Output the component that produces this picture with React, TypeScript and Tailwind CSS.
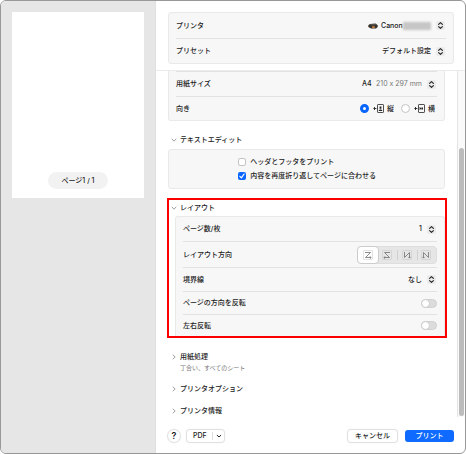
import type { ReactNode } from "react";

const SANS = "font-['Inter','Noto_Sans_CJK_JP',sans-serif]";

function Stepper() {
  return (
    <svg viewBox="0 0 9 9" className="pointer-events-none mr-px ml-[5px] h-[9px] w-[9px] shrink-0" aria-hidden="true">
      <rect width="9" height="9" rx="2" fill="#ebebeb" />
      <path d="M2.6 3.4 4.5 1.6 6.4 3.4M2.6 5.6 4.5 7.4 6.4 5.6" fill="none" stroke="#222" strokeWidth="1.1" strokeLinecap="round" strokeLinejoin="round" />
    </svg>
  );
}

function PrinterIcon() {
  return (
    <svg viewBox="0 0 10 6" className="h-[6px] w-[10px] shrink-0" aria-hidden="true">
      <path d="M0.3 2.2 2 1 7.5 0.6 9.7 2.2V4L8 5.4H3L0.3 4Z" fill="#34302c" />
      <path d="M1 1.9 2.3 1.2 7.3 0.9 8.8 1.8 5 2.4Z" fill="#5d5751" />
      <path d="M3.8 3.4 6.4 3 7.2 4.5 4.6 5.3Z" fill="#c9843f" />
    </svg>
  );
}

function OrientationIcon({ landscape = false }: { landscape?: boolean }) {
  return (
    <svg viewBox="0 0 11 10" className="h-[10px] w-[11px] shrink-0" aria-hidden="true" fill="none" stroke="#222" strokeWidth="0.9">
      <path d="M0.4 4.5H3.4M1.5 3 1.5 6" />
      <rect x="4.5" y="0.5" width="6" height="8" rx="0.6" strokeWidth="0.8" />
      {landscape ? (
        <path d="M5.6 2.8V6.2L7.3 4.5ZM9 3.6V5.4H7.4V3.6Z" fill="#222" stroke="none" />
      ) : (
        <path d="M5.8 7V6.2L6.9 5.4H8.1L9.2 6.2V7ZM6.6 2.4H8.4V4.8H6.6Z" fill="#222" stroke="none" />
      )}
    </svg>
  );
}

function Chevron({ open = false }: { open?: boolean }) {
  return (
    <svg viewBox="0 0 6 6" className="h-[6px] w-[6px] shrink-0" aria-hidden="true" fill="none" stroke="#8a8a8a" strokeWidth="0.8" strokeLinecap="round" strokeLinejoin="round">
      <path d={open ? "M1 2 3 4.2 5 2" : "M2 1 4.2 3 2 5"} />
    </svg>
  );
}

function Row({ label, htmlFor, height, first = false, children }: {
  label: string;
  htmlFor?: string;
  height: string;
  first?: boolean;
  children: ReactNode;
}) {
  return (
    <div className={`flex items-center justify-between ${height} ${first ? "" : "border-t border-[#e2e2e2]"}`}>
      {htmlFor ? <label htmlFor={htmlFor}>{label}</label> : <span>{label}</span>}
      <div className="flex items-center">{children}</div>
    </div>
  );
}

function Heading({ title, open = false }: { title: string; open?: boolean }) {
  return (
    <button type="button" aria-expanded={open} className="flex h-3 items-center gap-[3px] font-medium">
      <Chevron open={open} />
      {title}
    </button>
  );
}

function Select({ id, value }: { id: string; value: string }) {
  return (
    <select id={id} className="appearance-none bg-transparent font-medium" defaultValue={value}>
      <option>{value}</option>
    </select>
  );
}

function Radio({ id, checked = false }: { id: string; checked?: boolean }) {
  return (
    <input
      type="radio"
      id={id}
      name="orientation"
      defaultChecked={checked}
      className="h-[9px] w-[9px] shrink-0 appearance-none rounded-full border border-[#c4c4c4] bg-white checked:border-[3px] checked:border-[#0a66ff]"
    />
  );
}

function Toggle({ id }: { id: string }) {
  return (
    <input
      type="checkbox"
      role="switch"
      id={id}
      className="flex h-[9px] w-4 appearance-none items-center rounded-full border border-[#d0d0d0] bg-[#dcdcdc] before:-ml-px before:h-[9px] before:w-[9px] before:shrink-0 before:rounded-full before:border before:border-[#cacaca] before:bg-white before:content-[''] checked:justify-end checked:bg-[#0a66ff]"
    />
  );
}

const DIRECTIONS = [
  { name: "左上から右", line: "M3 3.5H8.5L3.5 8.5H9M7.9 7.3 9.1 8.5 7.9 9.7" },
  { name: "右上から左", line: "M9 3.5H3.5L8.5 8.5H3M4.1 7.3 2.9 8.5 4.1 9.7" },
  { name: "右上から下", line: "M3.5 3V8.5L8.5 3.5V9M7.3 7.9 8.5 9.1 9.7 7.9" },
  { name: "左上から下", line: "M8.5 3V8.5L3.5 3.5V9M2.3 7.9 3.5 9.1 4.7 7.9" },
];

function DirectionPicker() {
  return (
    <div role="radiogroup" aria-label="レイアウト方向" className="flex h-[18px] w-20 rounded-[4px] border border-[#dedede] bg-[#e6e6e6]">
      {DIRECTIONS.map((d, i) => (
        <label
          key={d.name}
          className={`flex flex-1 items-center justify-center ${i === 0 ? "-m-px rounded-[4px] border border-[#cccccc] bg-white" : ""} ${i > 1 ? "relative before:absolute before:left-0 before:h-[10px] before:w-px before:bg-[#d0d0d0]" : ""}`}
        >
          <input type="radio" name="direction" aria-label={d.name} defaultChecked={i === 0} className="sr-only" />
          <svg viewBox="0 0 12 12" className="h-3 w-3" aria-hidden="true" fill="none">
            <rect x="1.5" y="1.5" width="9" height="9" rx="0.5" stroke="#c4c4c4" strokeWidth="0.7" strokeOpacity="0.7" />
            <path d={d.line} stroke="#7c7c7c" strokeWidth="0.9" />
          </svg>
        </label>
      ))}
    </div>
  );
}

export default function App() {
  return (
    <div className={`flex min-h-screen overflow-hidden rounded-[6px] border border-[#989898] bg-white text-[7px] leading-[10px] font-medium text-[#222] ${SANS}`}>
      <aside className="w-[154px] shrink-0 bg-[#e6e6e6] p-[11px]">
        <div className="flex h-[186px] flex-col items-center justify-end bg-white pb-[9px]">
          <div className="flex h-[17px] w-[60px] items-center justify-center rounded-full bg-[#f2f2f2]">ページ1 / 1</div>
        </div>
      </aside>

      <main className="flex min-w-0 flex-1 flex-col border-l border-[#e0e0e0]">
        <header className="border-b border-[#ebebeb] pt-[11px] pr-[11px] pb-[6px] pl-3">
          <div className="rounded-[3px] border border-[#e9e9e9] bg-[#f7f7f7] px-[7px]">
            <Row label="プリンタ" htmlFor="printer" height="h-[25px]" first>
              <PrinterIcon />
              <span className="ml-[3px] flex items-center">
                <Select id="printer" value="Canon" />
                <span className="h-2 w-7 bg-[#c6c6c6] blur-[1px]" />
              </span>
              <Stepper />
            </Row>
            <Row label="プリセット" htmlFor="preset" height="h-[25px]">
              <Select id="preset" value="デフォルト設定" />
              <Stepper />
            </Row>
          </div>
        </header>

        <div className="flex">
          <div className="min-w-0 flex-1 pr-[10px] pl-[11px]">
            <section className="mr-[2px] ml-px rounded-b-[3px] border border-t-0 border-[#e9e9e9] bg-[#f7f7f7] px-[7px]">
              <Row label="用紙サイズ" htmlFor="paper" height="h-[25px]">
                <Select id="paper" value="A4" />
                <span className="ml-1 font-normal text-[#777] [font-feature-settings:'calt'_0]">210 x 297 mm</span>
                <Stepper />
              </Row>
              <Row label="向き" height="h-6">
                <Radio id="portrait" checked />
                <label htmlFor="portrait" className="ml-1 flex items-center gap-[3px]">
                  <OrientationIcon />縦
                </label>
                <span className="ml-[7px] flex"><Radio id="landscape" /></span>
                <label htmlFor="landscape" className="mr-[2px] ml-1 flex items-center gap-[3px]">
                  <OrientationIcon landscape />横
                </label>
              </Row>
            </section>

            <section className="mt-[13px] mr-[2px] ml-px">
              <div className="pl-[3px]"><Heading title="テキストエディット" open /></div>
              <div className="mt-[3px] flex h-10 flex-col justify-center gap-1 rounded-[3px] border border-[#e9e9e9] bg-[#f7f7f7] pl-[25%]">
                <label className="flex items-center gap-1">
                  <input type="checkbox" className="h-2 w-2 appearance-none rounded-[2px] border border-[#c4c4c4] bg-white" />
                  ヘッダとフッタをプリント
                </label>
                <label className="flex items-center gap-1">
                  <span className="relative flex h-2 w-2">
                    <input type="checkbox" defaultChecked className="h-2 w-2 appearance-none rounded-[2px] bg-[#0a66ff]" />
                    <svg viewBox="0 0 8 8" className="pointer-events-none absolute inset-0" aria-hidden="true">
                      <path d="M1.9 4.3 3.4 5.9 6.1 2" fill="none" stroke="#fff" strokeWidth="1.2" strokeLinecap="round" strokeLinejoin="round" />
                    </svg>
                  </span>
                  内容を再度折り返してページに合わせる
                </label>
              </div>
            </section>

            <section className="mt-[9px] border-2 border-[#fb0000] pt-[2px]">
              <div className="pl-[2px]"><Heading title="レイアウト" open /></div>
              <div className="mt-[2px] ml-[6px] rounded-t-[3px] border border-b-0 border-[#e9e9e9] bg-[#f7f7f7] px-[7px]">
                <Row label="ページ数/枚" htmlFor="pages" height="h-6" first>
                  <Select id="pages" value="1" />
                  <Stepper />
                </Row>
                <Row label="レイアウト方向" height="h-[26px]">
                  <DirectionPicker />
                </Row>
                <Row label="境界線" htmlFor="border" height="h-6">
                  <Select id="border" value="なし" />
                  <Stepper />
                </Row>
                <Row label="ページの方向を反転" htmlFor="reverse" height="h-[23px]">
                  <Toggle id="reverse" />
                </Row>
                <Row label="左右反転" htmlFor="flip" height="h-[22px]">
                  <Toggle id="flip" />
                </Row>
              </div>
            </section>

            <section className="mt-[13px] flex flex-col items-start gap-[10px] pl-1">
              <div>
                <Heading title="用紙処理" />
                <p className="pl-[9px] text-[6px] font-normal text-[#777]">丁合い、すべてのシート</p>
              </div>
              <Heading title="プリンタオプション" />
              <Heading title="プリンタ情報" />
            </section>
          </div>

          <div className="flex w-2 shrink-0 flex-col border-l border-[#e4e4e4] bg-[#fafafa] px-px pt-[77px] pb-px" aria-hidden="true">
            <div className="flex-1 rounded-full bg-[#bcbcbc]" />
          </div>
        </div>

        <footer className="mt-auto flex items-center pt-3 pr-[11px] pb-[11px] pl-3">
          <button type="button" aria-label="ヘルプ" className="h-3 w-3 rounded-full text-[9px] leading-3 font-semibold shadow-[0_0_1px_1px_#dedede]">?</button>
          <button type="button" className="ml-[7px] flex h-3 w-[37px] items-center rounded-[3px] pl-[6px] shadow-[0_0_1px_1px_#dedede]">
            PDF
            <span className="ml-[5px] h-2 w-px bg-[#dedede]" />
            <svg viewBox="0 0 6 6" className="ml-[3px] h-[6px] w-[6px]" aria-hidden="true">
              <path d="M1.2 2.3 3 4 4.8 2.3" fill="none" stroke="#222" strokeWidth="1" strokeLinecap="round" strokeLinejoin="round" />
            </svg>
          </button>
          <button type="button" className="ml-auto h-3 w-[49px] rounded-[3px] shadow-[0_0_1px_1px_#dedede]">キャンセル</button>
          <button type="button" className="ml-2 h-3 w-[49px] rounded-[3px] bg-[#0f6bff] text-white">プリント</button>
        </footer>
      </main>
    </div>
  );
}
